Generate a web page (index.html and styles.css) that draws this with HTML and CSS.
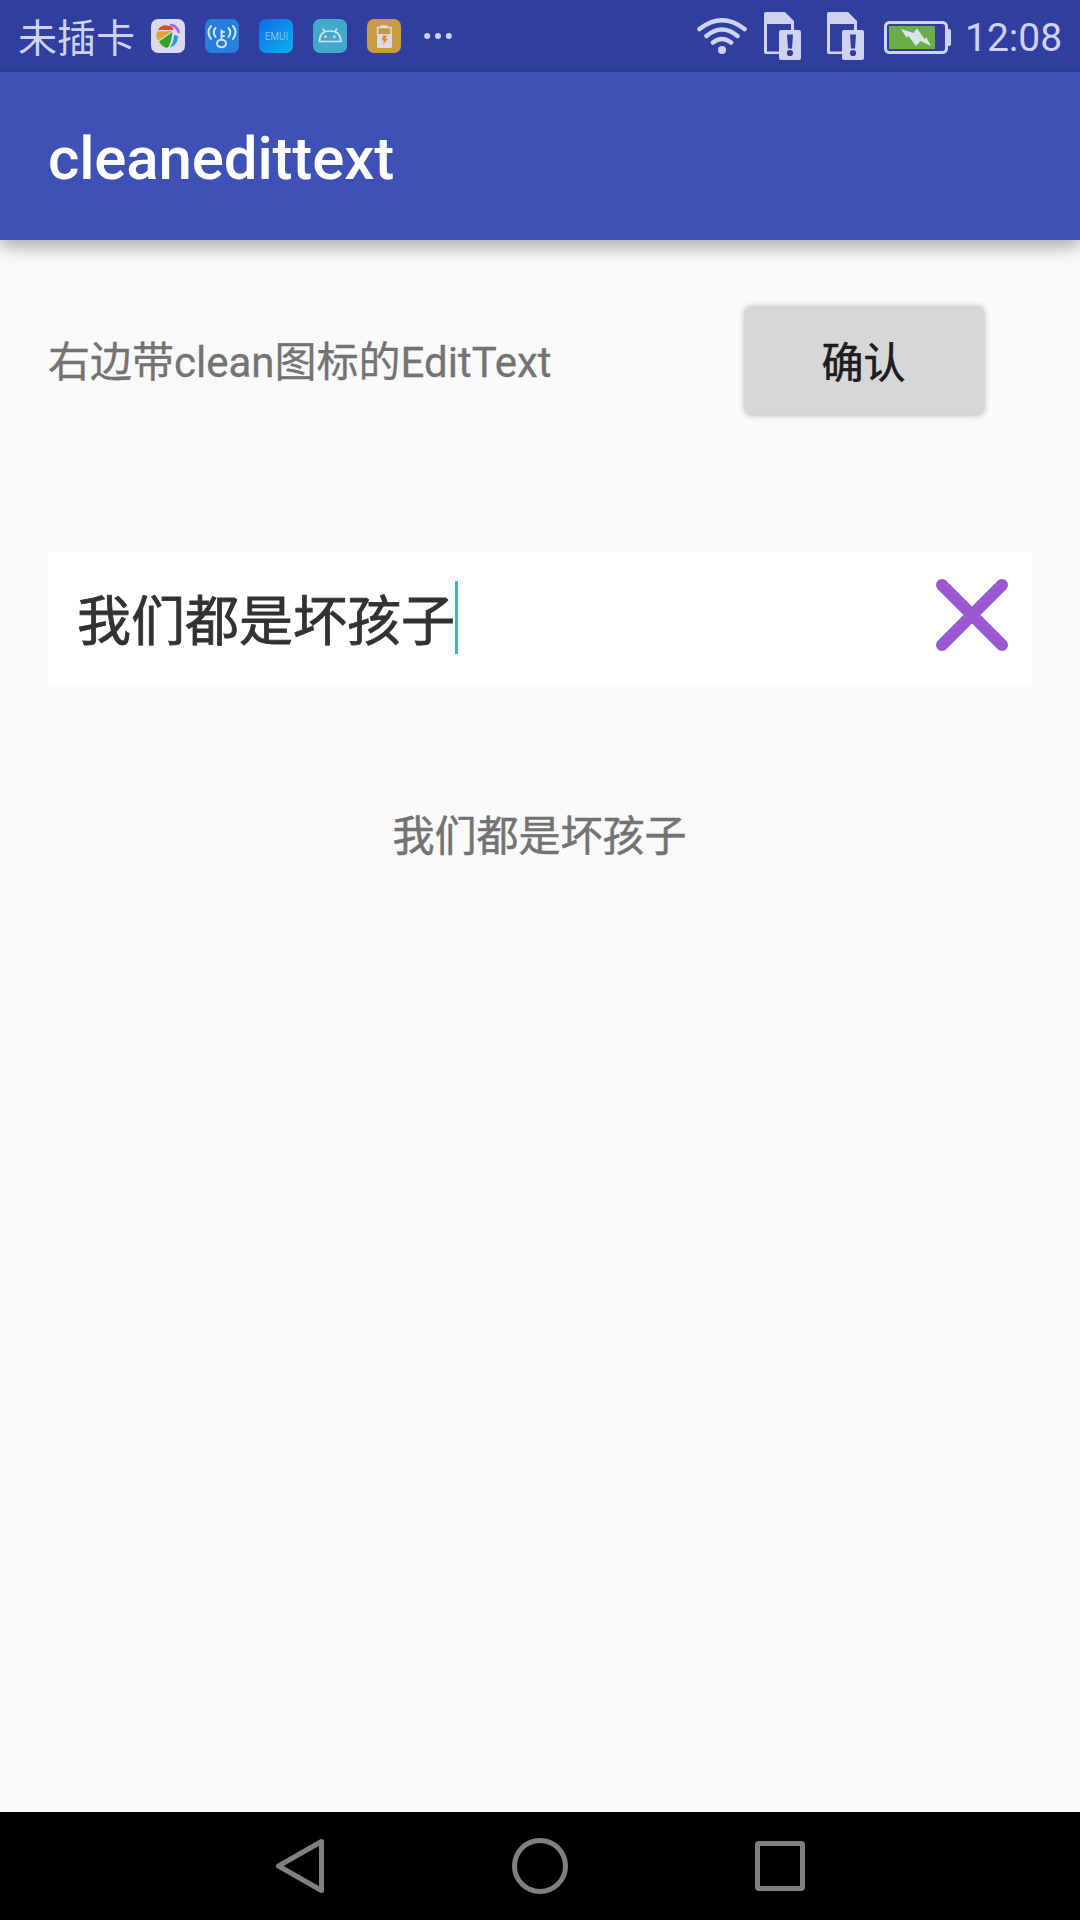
FILE: index.html
```html
<!DOCTYPE html>
<html lang="zh-CN">
<head>
<meta charset="utf-8">
<title>cleanedittext</title>
<link rel="stylesheet" href="styles.css">
</head>
<body>
<div class="screen">
  <header class="status-bar">
    <span class="carrier">未插卡</span>
    <div class="notifications">
      <svg class="app-icon" viewBox="0 0 34 34">
        <rect width="34" height="34" rx="7" fill="#dad9f2"/>
        <path d="M7 11C10 5 17 5 22 9v2z" fill="#d94b28"/>
        <path d="M6 12.500L21 12L7 21.500Q4 17 6 12.500z" fill="#dda52d"/>
        <path d="M21.500 13L8 22.500q4 7 9 6 3-4 4.500-15.500z" fill="#35a51d"/>
        <path d="M23 16l4 1q0 9-8 11.500 4-6 4-12.500z" fill="#2499df"/>
        <path d="M19 6q7 0 9 8" fill="none" stroke="#b35de0" stroke-width="2.500"/>
      </svg>
      <svg class="app-icon" viewBox="0 0 34 34">
        <rect width="34" height="34" rx="7" fill="#277fdd"/>
        <g fill="none" stroke="#d2e2f7" stroke-width="2" stroke-linecap="round">
          <path d="M6 7q-5 6 0 13M10.500 9q-3.500 4 0 9M28 7q5 6 0 13M23.500 9q3.500 4 0 9"/>
          <ellipse cx="16.500" cy="24.500" rx="4.500" ry="3.800"/><path d="M16.500 20V11.500M17 13h2M17 17h2"/>
        </g>
      </svg>
      <svg class="app-icon" viewBox="0 0 34 34">
        <defs><linearGradient id="sky" x1="0" y1="0" x2="1" y2="1"><stop offset="0" stop-color="#126be8"/><stop offset="1" stop-color="#08b0ec"/></linearGradient></defs>
        <rect width="34" height="34" rx="7" fill="url(#sky)"/>
        <text class="emui" x="17.500" y="20.500" text-anchor="middle" textLength="23" lengthAdjust="spacingAndGlyphs">EMUI</text>
      </svg>
      <svg class="app-icon" viewBox="0 0 34 34">
        <rect width="34" height="34" rx="7" fill="#43a9cc"/>
        <path d="M6.500 22.500Q6.500 12 17 12t11 10.500zM12 13l-2-3.500M22 13l2-3.500" fill="none" stroke="#d1e1f2" stroke-width="1.700"/>
        <circle cx="12.500" cy="17.800" r="1.300" fill="#d1e1f2"/><circle cx="21.500" cy="17.800" r="1.300" fill="#d1e1f2"/>
      </svg>
      <svg class="app-icon" viewBox="0 0 34 34">
        <rect width="34" height="34" rx="7" fill="#c99a40"/>
        <path d="M10.500 16V8.500h13.500V16M13.500 7h7" fill="none" stroke="#e0dce5" stroke-width="1.500"/>
        <path d="M10 15h15v12.500q0 1.500-1.500 1.500h-12q-1.500 0-1.500-1.500z" fill="#dcd9e9"/>
        <path d="M16 16.500h4l-1.300 3.500h2.300l-5 6 1-4.500h-2.500z" fill="#d39428"/>
      </svg>
      <svg class="more" viewBox="0 0 28 8" fill="#cfd2f0"><circle cx="3.200" cy="4" r="3"/><circle cx="14" cy="4" r="3"/><circle cx="24.800" cy="4" r="3"/></svg>
    </div>
    <div class="system">
      <svg class="wifi" viewBox="0 0 50 38">
        <g fill="none" stroke="#cfd2f0" stroke-width="4.500" stroke-linecap="round"><path d="M2.500 12Q25-5.500 47.500 12M9.500 19Q25 6 40.500 19M16 25.500Q25 18.500 34 25.500"/></g>
        <circle cx="25" cy="33" r="4" fill="#cfd2f0"/>
      </svg>
      <svg class="sim" viewBox="0 0 37 48">
        <path fill="#cfd2f0" fill-rule="evenodd" d="M2 0H21L30 9V18H35Q37 18 37 20V46Q37 48 35 48H17Q15 48 15 46V42H2Q0 42 0 40V2Q0 0 2 0zM3 12V39.500H15V20Q15 18 17 18H27V12z"/>
        <path fill="#303f9f" d="M23 22.500h6l-1 14h-4z"/><circle cx="26" cy="41" r="3.100" fill="#303f9f"/>
      </svg>
      <svg class="sim" viewBox="0 0 37 48">
        <path fill="#cfd2f0" fill-rule="evenodd" d="M2 0H21L30 9V18H35Q37 18 37 20V46Q37 48 35 48H17Q15 48 15 46V42H2Q0 42 0 40V2Q0 0 2 0zM3 12V39.500H15V20Q15 18 17 18H27V12z"/>
        <path fill="#303f9f" d="M23 22.500h6l-1 14h-4z"/><circle cx="26" cy="41" r="3.100" fill="#303f9f"/>
      </svg>
      <svg class="battery" viewBox="0 0 67 33">
        <rect x="1.500" y="1.500" width="61" height="30" rx="4" fill="none" stroke="#cfd2f0" stroke-width="3"/>
        <path d="M63 8h2q2 0 2 2v13q0 2-2 2h-2z" fill="#cfd2f0"/>
        <rect x="5" y="5" width="46" height="23" fill="#6aaf45"/>
        <path d="M17 8L29.500 12L33 7.500L40.500 18L42.500 16.500L47 25L36.500 20L32 25L24.500 15L22.500 16.500z" fill="#dce3e8"/>
      </svg>
      <span class="clock">12:08</span>
    </div>
  </header>
  <div class="app-bar"><h1 class="title">cleanedittext</h1></div>
  <main class="content">
    <div class="action-row">
      <span class="label">右边带clean图标的EditText</span>
      <button class="confirm" type="button">确认</button>
    </div>
    <div class="edit-text">
      <span class="value">我们都是坏孩子</span><span class="cursor"></span>
      <svg class="clear" viewBox="0 0 72 72"><path d="M6 6L66 66M66 6L6 66" stroke="#9958cf" stroke-width="12" stroke-linecap="round"/></svg>
    </div>
    <p class="result">我们都是坏孩子</p>
  </main>
  <nav class="nav-bar">
    <svg class="nav-icon" viewBox="0 0 60 60"><path d="M8.500 30L51.500 5.500V54.500z"/></svg>
    <svg class="nav-icon" viewBox="0 0 60 60"><circle cx="30" cy="30" r="25.500"/></svg>
    <svg class="nav-icon" viewBox="0 0 60 60"><rect x="7.500" y="7.500" width="45" height="45" rx="1.500"/></svg>
  </nav>
</div>
</body>
</html>
```
FILE: styles.css
```css
* { box-sizing: border-box; }
body { margin: 0; font-family: Roboto, "Noto Sans CJK SC", sans-serif; }
svg { display: block; flex: none; }
.screen { width: 1080px; height: 1920px; display: flex; flex-direction: column; background: #fafafa; overflow: hidden; }

.status-bar { height: 72px; flex: none; display: flex; align-items: center; padding: 0 18px; background: #303f9f; color: #cfd2f0; }
.carrier { font-size: 39px; line-height: 72px; width: 117px; white-space: nowrap; padding-top: 5px; }
.notifications { display: flex; align-items: center; gap: 20px; margin-left: 16px; }
.app-icon { width: 34px; height: 34px; }
.more { width: 28px; height: 8px; margin-left: 3px; }
.emui { font-family: Roboto, sans-serif; font-size: 10.500px; font-weight: 300; fill: #b9dcf8; }
.system { display: flex; align-items: center; margin-left: auto; }
.wifi { width: 50px; height: 38px; margin-right: 17px; }
.sim { width: 37px; height: 48px; margin-right: 26px; }
.sim + .battery { margin-left: -6px; }
.battery { width: 67px; height: 33px; margin: 3px 14px 0 0; }
.clock { font-size: 39px; line-height: 72px; width: 97px; padding-top: 4px; white-space: nowrap; }

.app-bar { height: 168px; flex: none; display: flex; align-items: center; padding: 6px 48px 0; background: #3f51b5; box-shadow: 0 6px 18px rgba(0, 0, 0, .35); z-index: 1; }
.title { margin: 0; font-size: 60px; line-height: 72px; font-weight: 500; letter-spacing: -.15px; color: #fff; }

.content { flex: 1; padding: 66px 48px 0; }
.action-row { height: 108px; display: flex; align-items: center; justify-content: space-between; padding-right: 48px; }
.label { font-size: 42px; line-height: 56px; color: #737373; white-space: nowrap; padding-top: 5px; -webkit-text-stroke: .3px #737373; }
.confirm { width: 239px; height: 108px; border: 0; border-radius: 6px; padding: 7px 2px 0 0; background: #d6d8d7; box-shadow: 0 1px 6px rgba(0, 0, 0, .3); font: 400 42px/56px Roboto, "Noto Sans CJK SC", sans-serif; color: #1c1d1d; -webkit-text-stroke: .6px #1c1d1d; }
.edit-text { height: 132px; margin-top: 138px; padding: 0 24px 0 29px; display: flex; align-items: center; background: #fff; }
.value { font-size: 54px; line-height: 80px; color: #323232; width: 378px; white-space: nowrap; padding-top: 10px; -webkit-text-stroke: .8px #323232; }
.cursor { width: 3px; height: 73px; margin-bottom: 1px; background: #3bb8bc; }
.clear { width: 72px; height: 72px; margin: 0 0 6px auto; }
.result { margin: 125px 0 0; padding-right: 1px; text-align: center; font-size: 42px; line-height: 56px; color: #737373; -webkit-text-stroke: .5px #737373; }

.nav-bar { height: 108px; flex: none; display: flex; align-items: center; justify-content: center; gap: 180px; background: #000; }
.nav-icon { width: 60px; height: 60px; fill: none; stroke: #808080; stroke-width: 5; stroke-linejoin: round; }
```
